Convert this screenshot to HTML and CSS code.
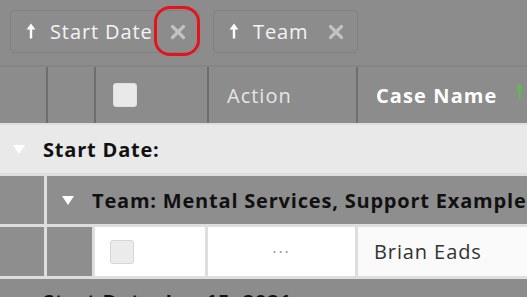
FILE: index.html
```html
<!DOCTYPE html>
<html>
<head>
<meta charset="utf-8">
<link rel="stylesheet" href="styles.css">
</head>
<body>
<div class="toolbar">
  <div class="chip">
    <svg class="chip-arrow" width="10" height="16" viewBox="0 0 10 16"><path d="M5 15.5 V3" stroke="#fff" stroke-width="2.4"/><path d="M0.6 6.5 L5 0.6 L9.4 6.5 Z" fill="#fff"/></svg>
    <span class="chip-label">Start Date</span>
    <span class="chip-x"><svg width="16" height="16" viewBox="0 0 16 16"><path d="M2.5 2.5 L13.5 13.5 M13.5 2.5 L2.5 13.5" stroke="#c2c2c2" stroke-width="3.2" stroke-linecap="round"/></svg></span>
    <span class="highlight"></span>
  </div>
  <div class="chip chip-team">
    <svg class="chip-arrow" width="10" height="16" viewBox="0 0 10 16"><path d="M5 15.5 V3" stroke="#fff" stroke-width="2.4"/><path d="M0.6 6.5 L5 0.6 L9.4 6.5 Z" fill="#fff"/></svg>
    <span class="chip-label">Team</span>
    <span class="chip-x"><svg width="16" height="16" viewBox="0 0 16 16"><path d="M2.5 2.5 L13.5 13.5 M13.5 2.5 L2.5 13.5" stroke="#c2c2c2" stroke-width="3.2" stroke-linecap="round"/></svg></span>
  </div>
</div>
<div class="grid">
  <div class="head-row">
    <div class="hcell"></div>
    <div class="hcell sep"></div>
    <div class="hcell sep cb-cell"><span class="checkbox head-cb"></span></div>
    <div class="hcell sep action">Action</div>
    <div class="hcell sep casename"><span>Case Name</span><svg class="sort-up" width="9" height="16" viewBox="0 0 9 16"><path d="M4.5 15.5 V2.5" stroke="#5cbf4a" stroke-width="2.2"/><path d="M0.5 6 L4.5 0.8 L8.5 6 Z" fill="#5cbf4a"/></svg></div>
  </div>
  <div class="body">
    <div class="group-row">
      <span class="tri tri-group"></span>
      <span class="group-text">Start Date:</span>
    </div>
    <div class="team-row">
      <div class="gcell"></div>
      <div class="gcell team-cell"><span class="tri"></span><span class="group-text">Team: Mental Services, Support Example</span></div>
    </div>
    <div class="data-row">
      <div class="dcell gray"></div>
      <div class="dcell gray"></div>
      <div class="dcell white cb-data"><span class="checkbox"></span></div>
      <div class="dcell white dots">···</div>
      <div class="dcell light name">Brian Eads</div>
    </div>
    <div class="group-row next">
      <span class="group-text">Start Date: Jan 15, 2021</span>
    </div>
  </div>
</div>
</body>
</html>
```
FILE: styles.css
```css
html, body {
  margin: 0;
  padding: 0;
  background: #8c8c8c;
  width: 527px;
  height: 297px;
  overflow: hidden;
  font-family: "Open Sans", "Noto Sans", sans-serif;
}
.toolbar {
  display: flex;
  gap: 13px;
  padding: 10px 0 0 10px;
  height: 55px;
  border-bottom: 2px solid #858585;
}
.chip {
  position: relative;
  display: flex;
  align-items: center;
  height: 43px;
  box-sizing: border-box;
  border: 1px solid #818181;
  border-radius: 4px;
  width: 190px;
  padding-left: 15px;
}
.chip-team { width: 145px; }
.chip-arrow {
  display: block;
  margin-right: 14px;
  margin-top: -2px;
}
.chip-label {
  color: #f4f4f4;
  font-size: 20px;
  letter-spacing: 0.9px;
}
.chip-x {
  display: flex;
  margin-left: auto;
  margin-right: 13px;
}
.highlight {
  position: absolute;
  left: 143px;
  top: -5px;
  width: 46px;
  height: 50px;
  box-sizing: border-box;
  border: 3px solid #e3141c;
  border-radius: 16px;
}
.head-row {
  display: grid;
  grid-template-columns: 46px 48px 113px 149px 1fr;
  height: 56px;
}
.hcell {
  display: flex;
  align-items: center;
  box-sizing: border-box;
}
.sep { border-left: 2px solid #6e6e6e; }
.cb-cell { padding-left: 17px; }
.checkbox {
  display: block;
  width: 24px;
  height: 24px;
  box-sizing: border-box;
  background: #ebebeb;
  border: 1px solid #d6d6d6;
  border-radius: 3px;
}
.head-cb { background: #e9e9e9; border-color: #e0e0e0; }
.action {
  padding-left: 18px;
  color: #e6e6e6;
  font-size: 20px;
  letter-spacing: 1px;
}
.casename {
  padding-left: 18px;
  color: #fff;
  font-size: 20px;
  font-weight: 700;
  letter-spacing: 1.1px;
  white-space: nowrap;
}
.sort-up {
  display: block;
  flex: none;
  margin-left: 18px;
  margin-top: -9px;
}
.body {
  display: flex;
  flex-direction: column;
  gap: 3px;
  background: #dedede;
  padding-top: 2px;
}
.group-row {
  display: flex;
  align-items: center;
  height: 48px;
  background: #e9e9e9;
  padding-left: 13px;
}
.group-text {
  font-size: 20px;
  font-weight: 700;
  color: #111;
  letter-spacing: 0.8px;
  white-space: nowrap;
}
.tri {
  width: 0;
  height: 0;
  border-left: 6.5px solid transparent;
  border-right: 6.5px solid transparent;
  border-top: 9px solid #fff;
  margin-right: 18px;
}
.tri-group { margin-right: 18px; }
.team-row {
  display: grid;
  grid-template-columns: 44px 1fr;
  gap: 3px;
  height: 48px;
}
.gcell { background: #8e8e8e; }
.team-cell {
  display: flex;
  align-items: center;
  padding-left: 15px;
  overflow: hidden;
}
.data-row {
  display: grid;
  grid-template-columns: 44px 45px 110px 147px 1fr;
  gap: 3px;
  height: 49px;
}
.dcell {
  display: flex;
  align-items: center;
}
.gray { background: #8e8e8e; }
.white { background: #fff; }
.light { background: #fafafa; }
.cb-data { padding-left: 15px; }
.dots {
  justify-content: center;
  color: #8a96a8;
  font-size: 16px;
  letter-spacing: 2px;
}
.name {
  padding-left: 16px;
  color: #333;
  font-size: 20px;
  letter-spacing: 0.9px;
}
.next {
  background: #8c8c8c;
  padding-left: 43px;
  align-items: flex-start;
  padding-top: 9px;
}
```
